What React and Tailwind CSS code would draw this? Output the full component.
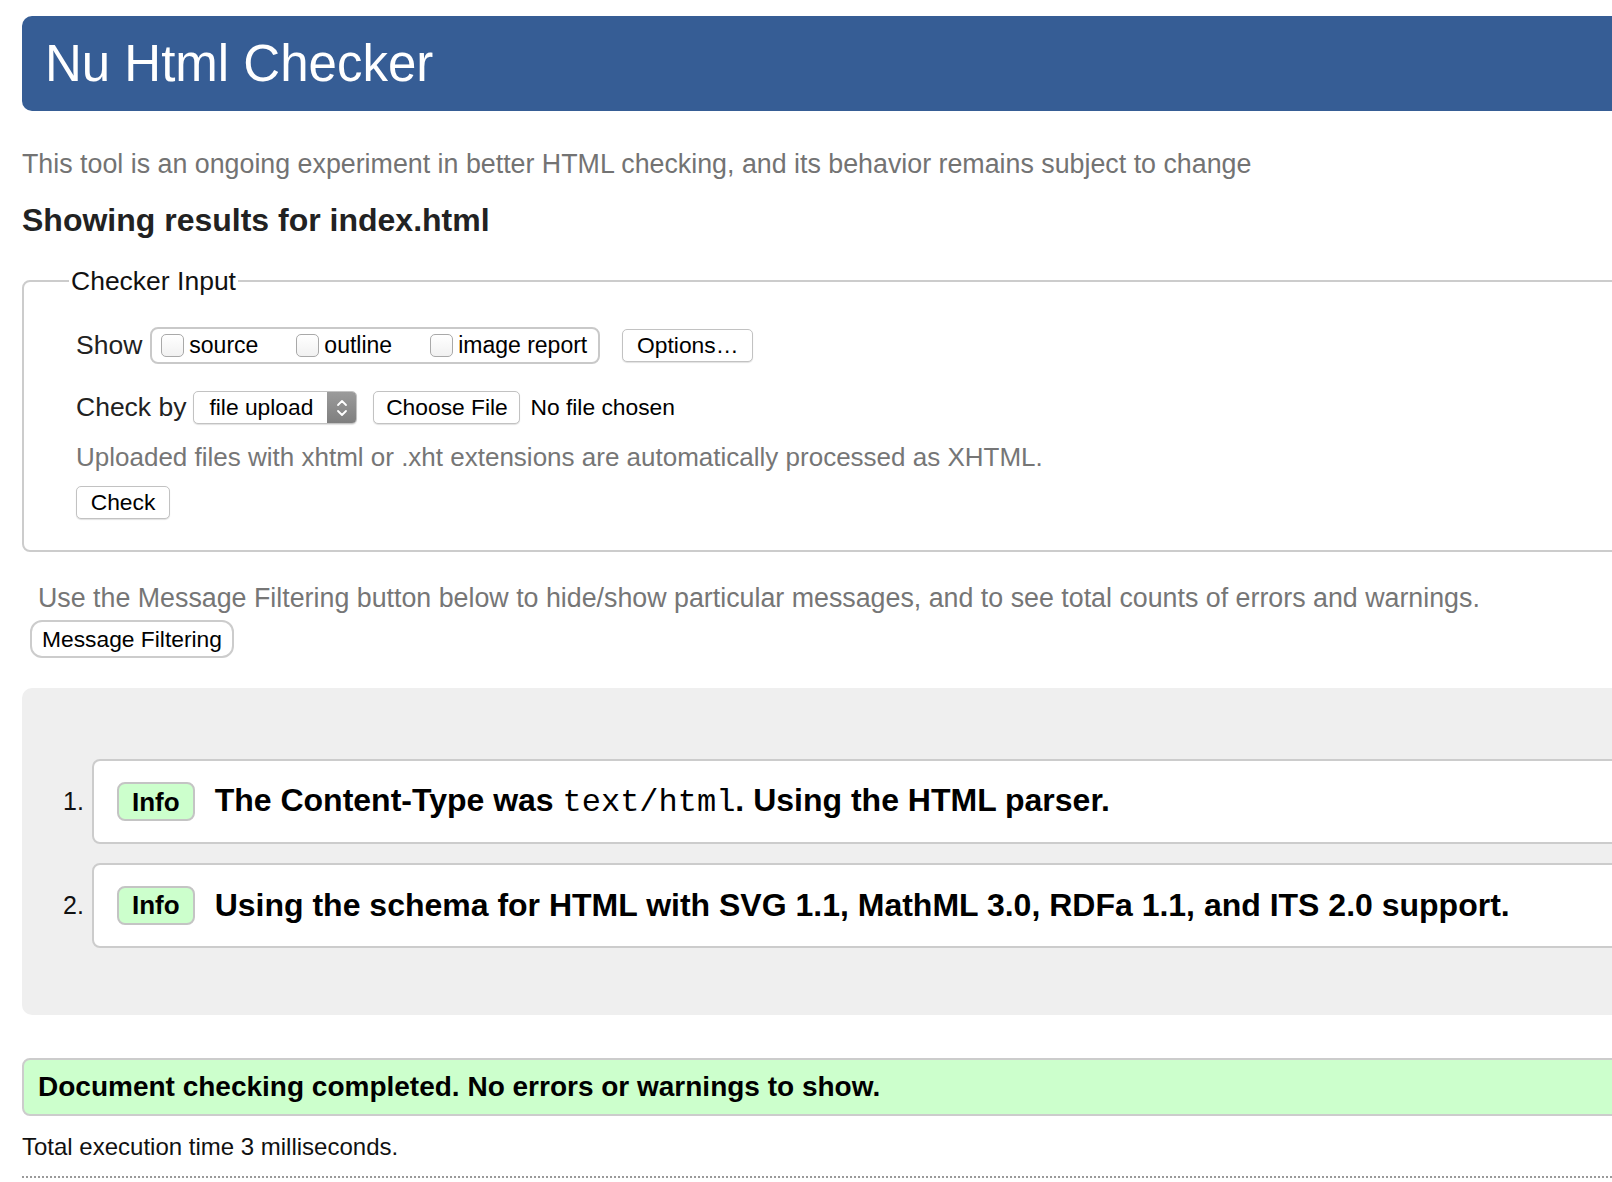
import React from "react";

function Checkbox({ className = "" }) {
  return (
    <span className={"block shrink-0 w-[23px] h-[23px] rounded-[5px] border border-[#a9a9a9] bg-gradient-to-b from-white to-[#f1f1f1] " + className} />
  );
}

function Btn({ children, className = "" }) {
  return (
    <span
      className={
        "inline-flex items-center justify-center h-[33px] rounded-[5px] border border-[#c2c2c2] bg-white shadow-[0_1px_1px_rgba(0,0,0,0.12)] text-[22.8px] text-black leading-none " +
        className
      }
    >
      {children}
    </span>
  );
}

export default function App() {
  return (
    <div className="w-[1612px] h-[1182px] overflow-hidden bg-white font-['Liberation_Sans',Arial,sans-serif]">
      <div className="w-[1720px] pl-[22px] pt-[16px]">
        {/* Header */}
        <div className="h-[95px] rounded-[10px] bg-[#365d95] flex items-center pl-[23px]">
          <h1 className="text-[51px] leading-none text-white font-normal">Nu Html Checker</h1>
        </div>

        <p className="mt-[37px] text-[26.8px] leading-[32px] text-[#737373]">
          This tool is an ongoing experiment in better HTML checking, and its behavior remains subject to change
        </p>

        <h2 className="mt-[21px] text-[32px] leading-[38px] font-bold text-[#222]">
          Showing results for index.html
        </h2>

        {/* Checker input fieldset */}
        <fieldset className="mt-[26px] border-2 border-[#cccccc] rounded-[8px] pl-[45px] pt-[30px] pb-[31px]">
          <legend className="px-[2px] text-[26.5px] leading-[32px] text-[#111]">Checker Input</legend>

          <div className="pl-[7px]">
            <div className="flex items-center h-[37px]">
              <span className="text-[26.5px] text-[#222] leading-none">Show</span>
              <div className="ml-[8px] h-[37px] w-[450px] rounded-[8px] border-2 border-[#c9c9c9] flex items-center pl-[9px] text-[23px] leading-none text-black">
                <Checkbox />
                <span className="ml-[5px]">source</span>
                <Checkbox className="ml-[38px]" />
                <span className="ml-[5px]">outline</span>
                <Checkbox className="ml-[38px]" />
                <span className="ml-[5px]">image report</span>
              </div>
              <Btn className="ml-[22px] w-[131px]">Options…</Btn>
            </div>

            <div className="mt-[27px] flex items-center h-[33px]">
              <span className="text-[26.5px] text-[#222] leading-none">Check by</span>
              <div className="ml-[7px] w-[164px] h-[33px] rounded-[5px] border border-[#c2c2c2] bg-white shadow-[0_1px_1px_rgba(0,0,0,0.12)] flex items-stretch overflow-hidden">
                <span className="flex-1 flex items-center pl-[15px] text-[22.8px] leading-none text-black">file upload</span>
                <span className="w-[29px] bg-gradient-to-b from-[#9b9b9b] to-[#7f7f7f] flex items-center justify-center">
                  <svg width="14" height="22" viewBox="0 0 14 22" fill="none" stroke="white" strokeWidth="1.8" strokeLinecap="round" strokeLinejoin="round">
                    <path d="M3 8 L7 4 L11 8" />
                    <path d="M3 14 L7 18 L11 14" />
                  </svg>
                </span>
              </div>
              <Btn className="ml-[16px] w-[147px]">Choose File</Btn>
              <span className="ml-[10px] text-[22.8px] text-black leading-none">No file chosen</span>
            </div>

            <p className="mt-[17px] text-[26px] leading-[32px] text-[#767676]">
              Uploaded files with xhtml or .xht extensions are automatically processed as XHTML.
            </p>

            <div className="mt-[13px] flex">
              <Btn className="w-[94px]">Check</Btn>
            </div>
          </div>
        </fieldset>

        <p className="mt-[30px] ml-[16px] text-[26.8px] leading-[32px] text-[#767676]">
          Use the Message Filtering button below to hide/show particular messages, and to see total counts of errors and warnings.
        </p>

        <div className="mt-[6px] ml-[8px] flex">
          <span className="inline-flex items-center justify-center h-[38px] w-[204px] rounded-[12px] border-2 border-[#cccccc] bg-white text-[22.8px] text-black leading-none">
            Message Filtering
          </span>
        </div>

        {/* Results panel */}
        <div className="mt-[30px] h-[327px] rounded-[10px] bg-[#efefef] pt-[71px]">
          <ol className="flex flex-col gap-[18.5px]">
            <li className="flex items-center pl-[41px]">
              <span className="w-[29px] text-[25px] text-[#111] leading-none">1.</span>
              <div className="flex-1 h-[85px] rounded-[8px] border-2 border-[#cccccc] bg-white flex items-center pl-[23px]">
                <span className="h-[39px] px-[13px] rounded-[8px] border-2 border-[#c4c4c4] bg-[#ccffcc] flex items-center text-[26px] font-bold text-black leading-none">Info</span>
                <span className="ml-[20px] text-[32px] font-bold text-black leading-none whitespace-nowrap">
                  The Content-Type was <code className="font-['Liberation_Mono','Courier_New',monospace] font-normal">text/html</code>. Using the HTML parser.
                </span>
              </div>
            </li>
            <li className="flex items-center pl-[41px]">
              <span className="w-[29px] text-[25px] text-[#111] leading-none">2.</span>
              <div className="flex-1 h-[85px] rounded-[8px] border-2 border-[#cccccc] bg-white flex items-center pl-[23px]">
                <span className="h-[39px] px-[13px] rounded-[8px] border-2 border-[#c4c4c4] bg-[#ccffcc] flex items-center text-[26px] font-bold text-black leading-none">Info</span>
                <span className="ml-[20px] text-[32px] font-bold text-black leading-none whitespace-nowrap">
                  Using the schema for HTML with SVG 1.1, MathML 3.0, RDFa 1.1, and ITS 2.0 support.
                </span>
              </div>
            </li>
          </ol>
        </div>

        <div className="mt-[43px] h-[58px] rounded-[8px] border-2 border-[#cccccc] bg-[#ccffcc] flex items-center pl-[14px]">
          <span className="text-[28px] font-bold text-black leading-none">
            Document checking completed. No errors or warnings to show.
          </span>
        </div>

        <p className="mt-[17px] text-[24px] leading-[28px] text-[#111]">Total execution time 3 milliseconds.</p>

        <div className="mt-[15px] border-t-2 border-dotted border-[#9a9a9a]" />
      </div>
    </div>
  );
}
